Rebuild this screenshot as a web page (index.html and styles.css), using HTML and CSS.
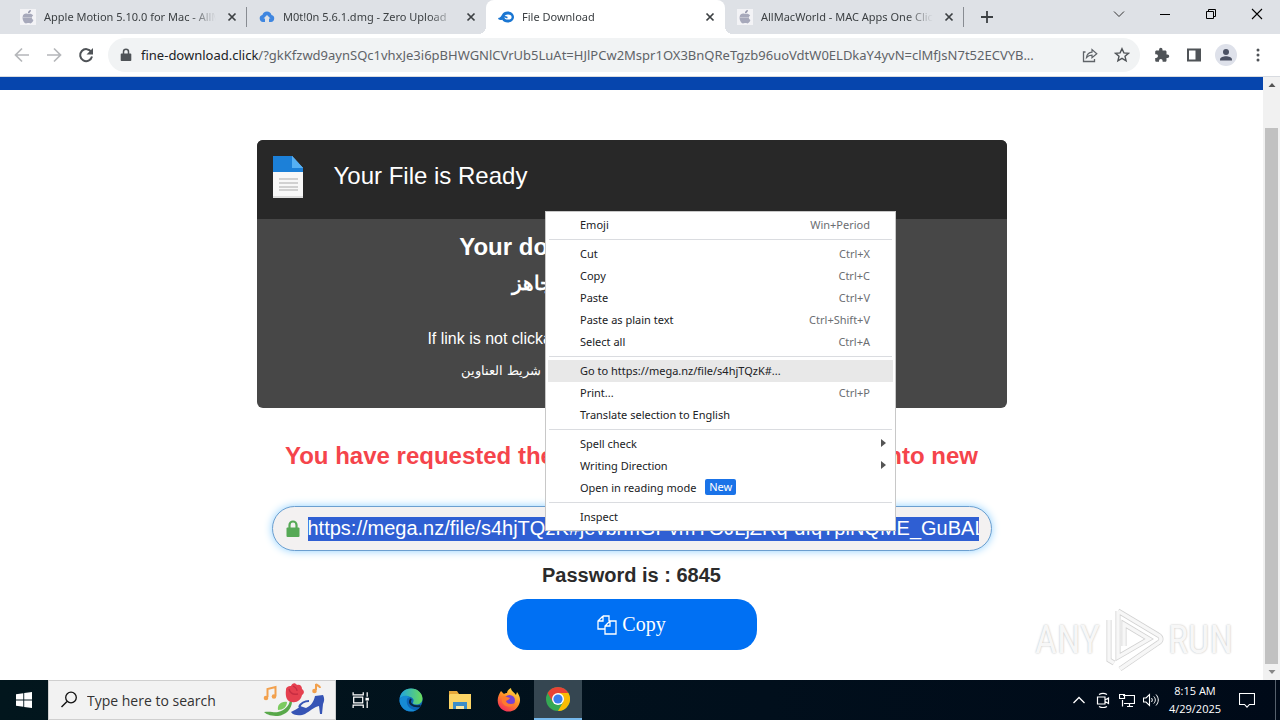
FILE: index.html
```html
<!DOCTYPE html>
<html lang="en">
<head>
  <meta charset="UTF-8">
  <meta name="viewport" content="width=device-width, initial-scale=1">
  <title>File Download</title>
  <link rel="stylesheet" href="styles.css">
</head>
<body>
  <!-- Shared icons -->
  <svg class="sprite" aria-hidden="true">
    <symbol id="apple" viewBox="0 0 16 16">
      <rect width="16" height="16" fill="#f3f3f6"/>
      <path d="M8 5c-2-1-5-.4-5.400 3C2.300 11.500 4.500 14.500 6 14.500c.8 0 1.200-.4 2.200-.4s1.300.4 2.200.4c1.300 0 2.600-1.800 3-3.400-1.900-.8-2.100-3.500-.2-4.500C12 4.600 9.800 4.400 8 5z" fill="#a7a9bb"/>
      <path d="M8 4.300C7.900 2.500 9.200 1.200 10.900 1c.1 1.800-1.200 3.200-2.900 3.300z" fill="#9193a8"/>
      <path d="M3 8.500h9" stroke="#c3c4d0"/>
    </symbol>
    <symbol id="close" viewBox="0 0 16 16">
      <path d="M4.500 4.500l7 7M11.500 4.500l-7 7" stroke="#3c4043" stroke-width="1.700"/>
    </symbol>
  </svg>

  <header class="tab-strip">
    <nav class="tabs">
      <div class="tab">
        <svg class="favicon"><use href="#apple"/></svg>
        <a href="#" class="tab-title">Apple Motion 5.10.0 for Mac - AllMacWorld</a>
        <button class="tab-close" aria-label="Close tab"><svg><use href="#close"/></svg></button>
      </div>
      <div class="tab">
        <svg class="favicon" viewBox="0 0 16 16"><path d="M4 13a3.500 3.500 0 0 1-.6-6.900 4.700 4.700 0 0 1 9.100 0A3.500 3.500 0 0 1 12 13h-2V9.500h1.500L8 6 4.500 9.500H6V13z" fill="#3f86e0"/></svg>
        <a href="#" class="tab-title">M0t!0n 5.6.1.dmg - Zero Upload</a>
        <button class="tab-close" aria-label="Close tab"><svg><use href="#close"/></svg></button>
      </div>
      <div class="tab active">
        <svg class="favicon" viewBox="0 0 16 16"><path d="M0 9c2 0 3-1.200 4-3.200C5.200 3.500 7 2.600 9.600 2.600c3.600 0 6.400 2.400 6.400 5.500s-2.800 5.500-6.400 5.500c-2.500 0-4.400-1-5.300-2.800C3.200 11 1.800 11.200.7 10.600z" fill="#1a76d2"/><ellipse cx="10" cy="8" rx="3.600" ry="2.600" fill="#fff"/><path d="M6 7.500c1.500 0 2 1 3.500 1" stroke="#1a76d2" stroke-width="1.400" fill="none"/></svg>
        <a href="#" class="tab-title">File Download</a>
        <button class="tab-close" aria-label="Close tab"><svg><use href="#close"/></svg></button>
      </div>
      <div class="tab">
        <svg class="favicon"><use href="#apple"/></svg>
        <a href="#" class="tab-title">AllMacWorld - MAC Apps One Click Away</a>
        <button class="tab-close" aria-label="Close tab"><svg><use href="#close"/></svg></button>
      </div>
      <button class="new-tab" aria-label="New tab"><svg viewBox="0 0 16 16"><path d="M8 2v12M2 8h12" stroke="#3c4043" stroke-width="1.800"/></svg></button>
    </nav>
    <div class="window-controls">
      <button aria-label="Search tabs"><svg viewBox="0 0 16 16"><path d="M3 5.500l5 5 5-5" fill="none" stroke="#333"/></svg></button>
      <button aria-label="Minimize"><svg viewBox="0 0 16 16"><path d="M3 8.500h10" stroke="#000"/></svg></button>
      <button aria-label="Restore"><svg viewBox="0 0 16 16"><path d="M3.500 5.500h7v7h-7zM5.500 5.500v-2h7v7h-2" fill="none" stroke="#000"/></svg></button>
      <button aria-label="Close"><svg viewBox="0 0 16 16"><path d="M3 3l10 10M13 3L3 13" stroke="#000" stroke-width="1.100"/></svg></button>
    </div>
  </header>

  <div class="toolbar">
    <button aria-label="Back"><svg viewBox="0 0 16 16"><path d="M15 8H2M8 1.500L1.500 8 8 14.500" fill="none" stroke="#b5b7ba" stroke-width="1.700"/></svg></button>
    <button aria-label="Forward"><svg viewBox="0 0 16 16"><path d="M1 8h13M8 1.500L14.500 8 8 14.500" fill="none" stroke="#b5b7ba" stroke-width="1.700"/></svg></button>
    <button aria-label="Reload"><svg viewBox="0 0 16 16"><path d="M13.300 5A6 6 0 1 0 14 9.500" fill="none" stroke="#4f5357" stroke-width="2"/><path d="M15 1v6.500H8.500z" fill="#4f5357"/></svg></button>
    <div class="omnibox">
      <svg class="site-lock" viewBox="0 0 12 14"><path d="M1.500 5.500h9a.8.8 0 0 1 .8.800v6a.8.8 0 0 1-.8.800h-9a.8.8 0 0 1-.8-.8v-6a.8.8 0 0 1 .8-.8z" fill="#4f5357"/><path d="M3.500 6V3.800a2.500 2.500 0 0 1 5 0V6" fill="none" stroke="#4f5357" stroke-width="1.500"/></svg>
      <a href="#" class="url"><span class="url-host">fine-download.click</span>/?gkKfzwd9aynSQc1vhxJe3i6pBHWGNlCVrUb5LuAt=HJlPCw2Mspr1OX3BnQReTgzb96uoVdtW0ELDkaY4yvN=clMfJsN7t52ECVYB...</a>
      <button class="share" aria-label="Share"><svg viewBox="0 0 16 16"><path d="M3.500 5H1.500v9.500h11V12" fill="none" stroke="#5f6368" stroke-width="1.300"/><path d="M4.500 10.500c.5-3.500 2.500-5 5.500-5.300V2.500L14.800 6.700 10 10.800V8.200c-2.300 0-4 .6-5.500 2.300z" fill="none" stroke="#5f6368" stroke-width="1.200"/></svg></button>
      <button aria-label="Bookmark"><svg viewBox="0 0 16 16"><path d="M8 1.700l1.900 4.200 4.600.4-3.500 3 1.100 4.500L8 11.400l-4.100 2.400L5 9.300l-3.500-3 4.600-.4z" fill="none" stroke="#4f5357" stroke-width="1.400"/></svg></button>
    </div>
    <button aria-label="Extensions"><svg viewBox="0 0 16 16"><path d="M13.500 7.500h-1V4.800c0-.7-.6-1.300-1.300-1.300H8.500v-1a1.700 1.700 0 0 0-3.400 0v1H2.500c-.7 0-1.300.6-1.300 1.300v2.500h1a1.800 1.800 0 0 1 0 3.600h-1v2.500c0 .7.600 1.300 1.300 1.300H5v-1a1.800 1.800 0 0 1 3.600 0v1h2.600c.7 0 1.300-.6 1.300-1.300V11h1a1.700 1.700 0 0 0 0-3.500z" fill="#4f5357"/></svg></button>
    <button aria-label="Side panel"><svg viewBox="0 0 16 16"><path d="M1 1.500h14v13H1zM3 3.500v9h6.500v-9z" fill="#4f5357" fill-rule="evenodd"/></svg></button>
    <button class="profile" aria-label="Profile"><svg viewBox="0 0 22 22"><circle cx="11" cy="11" r="11" fill="#dee1ea"/><circle cx="11" cy="8" r="3" fill="#4b5163"/><path d="M5 16.500v-1c0-2.200 3.500-3.200 6-3.200s6 1 6 3.200v1z" fill="#4b5163"/></svg></button>
    <button aria-label="Menu"><svg viewBox="0 0 16 16"><g fill="#4f5357"><circle cx="8" cy="3" r="1.500"/><circle cx="8" cy="8" r="1.500"/><circle cx="8" cy="13" r="1.500"/></g></svg></button>
  </div>

  <div class="viewport">
    <main class="page">
      <div class="top-bar"></div>
      <section class="card">
        <div class="card-header">
          <svg class="file-icon" viewBox="0 0 32 44"><path d="M1 1h19l11 12v30H1z" fill="#f8f8f8"/><path d="M1 1h19l11 12v4H1z" fill="#1c80d8"/><path d="M20 1l11 12H20z" fill="#55b0f4"/><path d="M7 24h19M7 28h19M7 32h19M7 35h19" stroke="#c4c4c4" stroke-width="1.400"/><path d="M1 42h30" stroke="#dedede" stroke-width="2"/></svg>
          <h1>Your File is Ready</h1>
        </div>
        <div class="card-body">
          <h2>Your download files are ready.</h2>
          <h2 class="title-ar" lang="ar" dir="rtl">رابط تحميل الملف الآن جاهز</h2>
          <p class="hint">If link is not clickable, copy and paste it in the address bar</p>
          <p class="hint-ar" lang="ar" dir="rtl">إذا كان الرابط غير قابل للنقر انسخه والصقه في شريط العناوين</p>
        </div>
      </section>
      <h2 class="notice">You have requested the page, copy link and paste it into new</h2>
      <div class="link-box">
        <svg viewBox="0 0 14 18"><path d="M3.500 8V5a3.500 3.500 0 0 1 7 0v3" fill="none" stroke="#56a956" stroke-width="2.200"/><rect x="0.500" y="7.500" width="13" height="9.500" rx="1" fill="#56a956"/></svg>
        <input type="text" aria-label="Download link" value="https://mega.nz/file/s4hjTQzK#jevbrmGPvmYOJLjZRq-dfqTpiNQME_GuBALk2">
      </div>
      <p class="password">Password is : 6845</p>
      <button class="copy-btn">
        <svg viewBox="0 0 20 20"><path d="M6 1h6v5M6 1L1 6v8h7M6 1v5H1M13 6h6v13H8v-8zM13 6v5H8" fill="none" stroke="#fff" stroke-width="1.300"/></svg>
        Copy
      </button>
    </main>
    <div class="scrollbar">
      <svg viewBox="0 0 16 16"><path d="M4.500 10h7L8 6z" fill="#555"/></svg>
      <div class="thumb"></div>
      <svg viewBox="0 0 16 16"><path d="M4.500 6h7L8 10z" fill="#888"/></svg>
    </div>
    <div class="watermark">
      <span>ANY</span>
      <svg viewBox="0 0 60 64"><path d="M14 3l40 24c4 2 4 6 0 8L16 61M5 12v40l5 3M14 3v46l31-18-25-15v22" fill="none" stroke="#d2d2d2" stroke-width="5"/><path d="M14 3l40 24c4 2 4 6 0 8L16 61M5 12v40l5 3M14 3v46l31-18-25-15v22" fill="none" stroke="#f7f7f7" stroke-width="3.500"/></svg>
      <span>RUN</span>
    </div>
  </div>

  <!-- Context menu -->
  <ul class="context-menu">
    <li><button>Emoji <kbd>Win+Period</kbd></button></li>
    <li class="divider"></li>
    <li><button>Cut <kbd>Ctrl+X</kbd></button></li>
    <li><button>Copy <kbd>Ctrl+C</kbd></button></li>
    <li><button>Paste <kbd>Ctrl+V</kbd></button></li>
    <li><button>Paste as plain text <kbd>Ctrl+Shift+V</kbd></button></li>
    <li><button>Select all <kbd>Ctrl+A</kbd></button></li>
    <li class="divider"></li>
    <li><button class="hovered">Go to https://mega.nz/file/s4hjTQzK#...</button></li>
    <li><button>Print... <kbd>Ctrl+P</kbd></button></li>
    <li><button>Translate selection to English</button></li>
    <li class="divider"></li>
    <li><button class="has-submenu">Spell check</button></li>
    <li><button class="has-submenu">Writing Direction</button></li>
    <li><button>Open in reading mode <span class="badge">New</span></button></li>
    <li class="divider"></li>
    <li><button>Inspect</button></li>
  </ul>

  <footer class="taskbar">
    <button class="start" aria-label="Start"><svg viewBox="0 0 16 16"><path d="M0 2.200L7.300 1.200v6.300H0zM8.200 1.100L16 0v7.500H8.200zM0 8.400h7.300v6.300L0 13.700zM8.200 8.400H16V16l-7.800-1.100z" fill="#fff"/></svg></button>
    <div class="search">
      <svg class="search-icon" viewBox="0 0 18 18"><circle cx="11" cy="6.500" r="5.300" fill="none" stroke="#111" stroke-width="1.300"/><path d="M7 10.500L1.500 16" stroke="#111" stroke-width="1.400"/></svg>
      <input type="text" aria-label="Search" placeholder="Type here to search">
      <svg class="doodle" viewBox="0 0 64 34">
        <g fill="none" stroke="#f2a04c" stroke-width="2"><path d="M4.500 14V6l8-2v9"/><path d="M53 7V1c1 2 4 1 4 4"/></g>
        <g fill="#f2a04c"><circle cx="3" cy="15" r="2.300"/><circle cx="11" cy="13.500" r="2.300"/><circle cx="51.500" cy="8" r="2.300"/></g>
        <path d="M1 29c7-1 10 1 14 0 7-2 11-6 12-12l2 1c0 8-6 14-14 15-6 0-11-1-14-4z" fill="#58a84a"/>
        <path d="M15 27c-1-5 3-9 9-8 0 5-4 8-9 8z" fill="#7ccb5f"/>
        <path d="M23 7c0-3 2-4 5-4 1-3 4-4 6-1 3-1 5 1 5 4 3 2 2 5 0 6-1 5-5 8-10 7-5 0-7-5-6-12z" fill="#e5404f"/>
        <path d="M26 6c1 4 4 6 9 5M30 3c2 1 4 3 4 5" fill="none" stroke="#c72d42" stroke-width="1.300"/>
        <path d="M28 29c3-2 7-3 9-6l6 2c5-2 8-7 9-12l8-1c2 4 1 7 0 9l-1 10h-2l-1-8c-5 1-9 5-14 8-4 2-12 2-14-2z" fill="#3654b5"/>
        <path d="M36 24c2-4 6-6 10-6" stroke="#3654b5" stroke-width="2" fill="none"/>
      </svg>
    </div>
    <div class="apps">
      <button class="task-view" aria-label="Task view"><svg viewBox="0 0 16 16"><path d="M1 1v2.500h9V1M1 15v-2.500h9V15M1.500 5.500h8v5h-8zM13.500 1v4M13.500 9v6" fill="none" stroke="#fff" stroke-width="1.100"/><path d="M12 6h3v2.500h-3z" fill="#fff"/></svg></button>
      <button aria-label="Edge"><svg viewBox="0 0 24 24">
        <defs><linearGradient id="edgeTop" x1="0" y1="0" x2="1" y2="0"><stop offset="0" stop-color="#1fa3e0"/><stop offset="1" stop-color="#6bdc5b"/></linearGradient></defs>
        <circle cx="12" cy="12" r="11.500" fill="#0c65b8"/>
        <path d="M.5 11C1.500 4.500 6 .5 12 .5c7 0 11.500 5 11.500 10 0 4-3 6-6.500 6-2.500 0-3.500-1-3-2 1-1.500 1-4-2-5.300C8 7.500 2 8 .5 11z" fill="url(#edgeTop)"/>
        <path d="M8 11c-1.500 6 3 11 9 11.200-9 4-16.500-3-16.500-10.200C2 7 8.500 7 11 9.500 9.500 9.500 8.400 10 8 11z" fill="#168bd4"/>
        <path d="M12 11c-3 4 1 8.500 9.500 7" fill="none" stroke="#08263f" stroke-width="2"/>
      </svg></button>
      <button aria-label="File Explorer"><svg viewBox="0 0 24 24"><path d="M1 3h8l2 3h12v15H1z" fill="#e7a93a"/><path d="M2 6h21v15H1V7z" fill="#fcd566"/><path d="M5 14h14v7h-3v-3H8v3H5z" fill="#3d8ec8"/><path d="M8 18h8v3H8z" fill="#fce9a5"/></svg></button>
      <button aria-label="Firefox"><svg viewBox="0 0 24 24">
        <defs><linearGradient id="fox" x1=".8" y1="0" x2=".2" y2="1"><stop offset="0" stop-color="#ffe344"/><stop offset=".5" stop-color="#ff8a26"/><stop offset="1" stop-color="#f3245f"/></linearGradient></defs>
        <path d="M4 3l3 3c1-1 2-1 3-1 0-2 2-4 4-5 0 3 3 4 5 7l1-3c3 4 4 8 2 12.500C19.500 21.500 16 23.500 12 23.500 5.500 23.500.5 18.500.7 12 .8 9 2 6 4 3z" fill="url(#fox)"/>
        <circle cx="12.500" cy="12.500" r="5.500" fill="#7542d3"/><path d="M5 9c3-1 5 0 8 1-1 2-3 2-4 3 1 3 5 4 9 2-2 5-11 5-13-1z" fill="#ff7a2e"/>
      </svg></button>
      <button class="running" aria-label="Chrome"><svg viewBox="0 0 24 24"><circle cx="12" cy="12" r="12" fill="#35a853"/><path d="M12 0a12 12 0 0 1 10.400 6H12L6.800 15 1.600 6A12 12 0 0 1 12 0z" fill="#e94235"/><path d="M22.400 6A12 12 0 0 1 12 24l5.200-9L12 6z" fill="#fbbc04"/><circle cx="12" cy="12" r="6" fill="#fff"/><circle cx="12" cy="12" r="4.600" fill="#3b7ded"/></svg></button>
    </div>
    <div class="tray">
      <button aria-label="Show hidden icons"><svg viewBox="0 0 16 16"><path d="M2.500 11L8 5.500l5.500 5.500" fill="none" stroke="#fff" stroke-width="1.300"/></svg></button>
      <button aria-label="Meet now"><svg viewBox="0 0 16 16"><path d="M2.500 5h7.500v7H2.500zM10 8l3.500-2v5.500L10 9.500M4 2.500c2.500-1.500 5.500-1.500 8 0M4 14.500c2.500 1.500 5.500 1.500 8 0" fill="none" stroke="#fff" stroke-width="1.200"/></svg></button>
      <button aria-label="Network"><svg viewBox="0 0 16 16"><path d="M4 3.500h11.500v8H5M3.500 8v6.500M8 14.500h6M10.500 11.500v3M.5 2.500h5v4h-5z" fill="none" stroke="#fff" stroke-width="1.200"/></svg></button>
      <button aria-label="Volume"><svg viewBox="0 0 16 16"><path d="M.5 6h2.500l3.500-3.500v11L3 10H.5z" fill="none" stroke="#fff" stroke-width="1.100"/><path d="M8.500 6c1 1.300 1 2.700 0 4M10.800 4.500c2 2.200 2 4.800 0 7M13 2.500c3 3.500 3 7.500 0 11" fill="none" stroke="#fff"/></svg></button>
      <div class="clock"><time>8:15 AM</time><time>4/29/2025</time></div>
      <button class="notifications" aria-label="Notifications"><svg viewBox="0 0 16 16"><path d="M.5 1.500h15v11h-5L8 15.200l-2.500-2.700h-5z" fill="none" stroke="#fff" stroke-width="1.100"/></svg></button>
    </div>
  </footer>
</body>
</html>
```

FILE: styles.css
```css
* {
    box-sizing: border-box;
}

body {
    margin: 0;
    height: 100vh;
    display: flex;
    flex-direction: column;
    overflow: hidden;
    background: #fff;
    font-family: "Noto Sans", "Open Sans", sans-serif;
    font-size: 11px;
}

button {
    display: flex;
    align-items: center;
    justify-content: center;
    padding: 0;
    border: none;
    background: none;
    font: inherit;
    color: inherit;
}

svg {
    flex: none;
    width: 16px;
    height: 16px;
}

a {
    color: inherit;
    text-decoration: none;
}

.sprite {
    position: absolute;
    width: 0;
    height: 0;
}

/* Tabs */
.tab-strip {
    display: flex;
    justify-content: space-between;
    height: 34px;
    flex: none;
    background: #dee1e6;
}

.tabs {
    display: flex;
    min-width: 0;
    padding-left: 8px;
}

.tab {
    display: flex;
    align-items: center;
    gap: 8px;
    width: 239px;
    padding: 0 7px 1px 12px;
    color: #3c4043;
    background: linear-gradient(#888c92, #888c92) right center / 1px 20px no-repeat;
}

.tab.active {
    position: relative;
    background: #fff;
    border-radius: 8px 8px 0 0;
}

.tab:has(+ .active) {
    background: none;
}

.tab.active::before,
.tab.active::after {
    content: "";
    position: absolute;
    bottom: 0;
    width: 8px;
    height: 8px;
}

.tab.active::before {
    left: -8px;
    background: radial-gradient(circle at 0 0, transparent 8px, #fff 8px);
}

.tab.active::after {
    right: -8px;
    background: radial-gradient(circle at 100% 0, transparent 8px, #fff 8px);
}

.tab-title {
    flex: 1;
    overflow: hidden;
    white-space: nowrap;
    mask-image: linear-gradient(to right, #000 85%, transparent);
}

.tab-close svg {
    display: block;
}

.new-tab {
    width: 46px;
}

.window-controls {
    display: flex;
    height: 28px;
}

.window-controls button {
    width: 46px;
}

/* Toolbar */
.toolbar {
    display: flex;
    align-items: center;
    height: 43px;
    flex: none;
    padding: 0 6px;
    border-bottom: 1px solid #d8dbe0;
}

.toolbar > button {
    width: 32px;
    height: 32px;
}

.profile svg {
    width: 22px;
    height: 22px;
}

.omnibox {
    display: flex;
    align-items: center;
    flex: 1;
    min-width: 0;
    height: 34px;
    margin: 0 6px;
    padding: 0 2px 0 12px;
    border-radius: 17px;
    background: #f1f3f4;
}

.omnibox button {
    width: 32px;
}

.site-lock {
    width: 12px;
    height: 14px;
    margin-right: 9px;
}

.url {
    flex: 1;
    overflow: hidden;
    white-space: nowrap;
    font-size: 13px;
    color: #5f6368;
}

.url-host {
    color: #202124;
}

/* Page */
.viewport {
    position: relative;
    display: flex;
    flex: 1;
    min-height: 0;
}

.page {
    flex: 1;
    font-family: "Liberation Sans", sans-serif;
    text-align: center;
}

.page h1,
.page h2,
.page p {
    margin: 0;
}

.page h1,
.page h2 {
    font-size: 24px;
    line-height: 36px;
}

.top-bar {
    height: 13px;
    background: #0645ad;
}

.card {
    max-width: 750px;
    margin: 50px auto 0;
    border-radius: 6px;
    overflow: hidden;
    background: #474747;
    color: #fff;
}

.card-header {
    display: flex;
    align-items: flex-start;
    gap: 30px;
    height: 79px;
    padding: 15px;
    background: #282828;
}

.card-header h1 {
    font-weight: 400;
    line-height: 42px;
}

.file-icon {
    width: 32px;
    height: 44px;
}

.card-body {
    padding: 10px 16px 23px;
}

.card-body .title-ar {
    font-size: 20px;
}

.hint {
    padding-top: 24px;
    font-size: 16px;
    line-height: 28px;
}

.hint-ar {
    padding-top: 4px;
    font-size: 13px;
    line-height: 28px;
}

.page .notice {
    margin: 30px 0 32px;
    color: #f5444b;
}

.link-box {
    display: flex;
    align-items: center;
    gap: 8px;
    max-width: 720px;
    height: 45px;
    margin: 0 auto;
    padding: 0 12px 0 13px;
    border: 1px solid #6b9fd0;
    border-radius: 23px;
    background: #f3f1f1;
    box-shadow: 0 0 8px #8fd0ff;
}

.link-box svg {
    width: 14px;
    height: 18px;
}

.link-box input {
    flex: 1;
    height: 24px;
    padding: 0;
    border: none;
    outline: none;
    background: #2f5fd3;
    color: #fff;
    font-family: "Liberation Sans", sans-serif;
    font-size: 20px;
}

.page .password {
    margin: 12px 0;
    color: #2b2b2b;
    font-size: 20px;
    font-weight: 700;
    line-height: 24px;
}

.copy-btn {
    gap: 5px;
    width: 250px;
    height: 51px;
    margin: 0 auto;
    border-radius: 20px;
    background: #0070f3;
    color: #fff;
    font-family: "Liberation Serif", serif;
    font-size: 20px;
}

.copy-btn svg {
    width: 20px;
    height: 20px;
}

.scrollbar {
    display: flex;
    flex-direction: column;
    align-items: center;
    justify-content: space-between;
    width: 17px;
    background: #f1f1f1;
}

.thumb {
    flex: 1;
    width: 13px;
    margin-top: 35px;
    background: #c1c1c1;
}

.watermark {
    position: absolute;
    right: 47px;
    bottom: 8px;
    display: flex;
    align-items: center;
    gap: 4px;
    color: #f7f7f7;
    font-family: "Liberation Sans Narrow", "Roboto Condensed", Roboto, sans-serif;
    font-size: 38px;
    text-shadow: 0 0 2px #b8b8b8;
}

.watermark svg {
    width: 60px;
    height: 64px;
}

/* Context menu */
.context-menu {
    position: absolute;
    left: 545px;
    top: 211px;
    width: 351px;
    margin: 0;
    padding: 2px;
    list-style: none;
    border: 1px solid #c8c8c8;
    background: #fff;
    color: #202124;
}

.context-menu button {
    justify-content: flex-start;
    width: 100%;
    height: 22px;
    padding: 0 23px 2px 32px;
    white-space: pre;
}

.context-menu .hovered {
    background: #e8e8e8;
}

.context-menu kbd {
    margin-left: auto;
    font-family: inherit;
    color: #6b6e72;
}

.context-menu .has-submenu {
    justify-content: space-between;
    padding-right: 7px;
}

.has-submenu::after {
    content: "";
    border: 4px solid transparent;
    border-left: 5px solid #555;
    border-right: none;
}

.divider {
    height: 1px;
    margin: 3px 1px;
    background: #dadce0;
}

.badge {
    margin-left: 6px;
    padding: 0 4px;
    border-radius: 2px;
    background: #1a73e8;
    color: #fff;
    line-height: 16px;
}

/* Taskbar */
.taskbar {
    display: flex;
    height: 40px;
    flex: none;
    background: linear-gradient(to right, #02161d, #010f1c 60%, #000a18);
    color: #fff;
    font-family: "Open Sans", sans-serif;
}

.start {
    width: 48px;
}

.search {
    display: flex;
    align-items: center;
    width: 288px;
    padding: 0 8px 0 11px;
    border: 1px solid #cfcfcf;
    background: #f2f2f2;
}

.search-icon {
    width: 18px;
    height: 18px;
}

.search input {
    flex: 1;
    min-width: 0;
    padding: 0 0 0 9px;
    border: none;
    background: none;
    font: inherit;
    font-size: 14px;
}

.search input::placeholder {
    color: #333;
}

.doodle {
    width: 64px;
    height: 34px;
}

.apps {
    display: flex;
    gap: 1px;
}

.apps button {
    width: 48px;
}

.apps svg {
    width: 24px;
    height: 24px;
}

.apps .task-view {
    width: 50px;
}

.task-view svg {
    width: 18px;
    height: 18px;
}

.apps .running {
    background: #354651;
    border-bottom: 2px solid #76b9ed;
}

.tray {
    display: flex;
    margin-left: auto;
    margin-right: 4px;
    border-right: 1px solid #56606c;
}

.tray button {
    width: 24px;
}

.clock {
    display: flex;
    flex-direction: column;
    justify-content: center;
    width: 64px;
    text-align: center;
    line-height: 18px;
}

.tray .notifications {
    width: 48px;
    padding-right: 8px;
}
```
